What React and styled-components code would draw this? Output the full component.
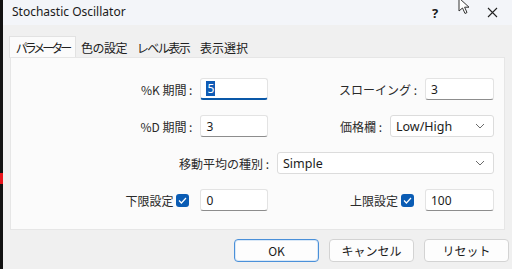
import styled, { createGlobalStyle } from "styled-components";

const GlobalStyle = createGlobalStyle`
  html, body {
    margin: 0;
    padding: 0;
    background: #efefef;
  }
  body {
    font-family: "Noto Sans CJK JP", "Noto Sans", sans-serif;
    font-size: 12px;
    color: #1b1b1b;
  }
`;

const Screen = styled.div`
  display: flex;
  width: 512px;
  height: 269px;
  overflow: hidden;
  position: relative;
`;

const EdgeStrip = styled.div`
  width: 3px;
  background: #111;
  display: flex;
  flex-direction: column;
  padding-top: 173px;
  box-sizing: border-box;
`;

const RedMark = styled.div`
  height: 11px;
  background: #e8141c;
`;

const Dialog = styled.div`
  flex: 1;
  display: flex;
  flex-direction: column;
  background: #f0f0f0;
`;

const TitleBar = styled.div`
  height: 25px;
  background: #f3f5f9;
  display: flex;
  align-items: center;
  padding-left: 9px;
  font-family: "Noto Sans", sans-serif;
  font-size: 12px;
  color: #1a1a1a;
`;

const Title = styled.span`
  flex: 1;
  padding-bottom: 2px;
`;

const TitleButton = styled.span`
  width: ${(p) => p.w}px;
  display: flex;
  justify-content: center;
  font-size: 13px;
  font-weight: ${(p) => (p.bold ? 700 : 400)};
`;

const Tabs = styled.div`
  display: flex;
  margin: 11px 0 0 6px;
  height: 21px;
  align-items: flex-end;
`;

const Tab = styled.div`
  width: ${(p) => p.w}px;
  height: ${(p) => (p.active ? 22 : 20)}px;
  margin-bottom: ${(p) => (p.active ? -1 : 0)}px;
  background: ${(p) => (p.active ? "#fbfbfb" : "#f0f0f0")};
  border: 1px solid ${(p) => (p.active ? "#e2e2e2" : "transparent")};
  border-bottom: none;
  display: flex;
  align-items: center;
  justify-content: center;
  font-size: 12px;
  letter-spacing: ${(p) => p.tight ?? 0}px;
  color: #202020;
  box-sizing: border-box;
  white-space: nowrap;
`;

const Panel = styled.div`
  margin-left: 7px;
  width: 495px;
  height: 173px;
  background: #fbfbfb;
  border: 1px solid #e6e6e6;
  box-sizing: border-box;
  display: flex;
  flex-direction: column;
  gap: 15px;
  padding: 20px 10px 0 0;
`;

const Row = styled.div`
  display: flex;
  height: 22px;
`;

const Half = styled.div`
  width: ${(p) => p.w}px;
  display: flex;
  justify-content: flex-end;
  align-items: center;
`;

const Label = styled.span`
  margin-right: ${(p) => p.gap ?? 8}px;
  white-space: nowrap;
  font-size: 12px;
  color: #2a2a2a;
`;

const Input = styled.div`
  width: ${(p) => p.w}px;
  height: 22px;
  box-sizing: border-box;
  background: #fff;
  border: 1px solid #e3e3e3;
  border-bottom: ${(p) => (p.active ? "2px solid #0a58a8" : "1px solid #8d8d8d")};
  border-radius: 3px;
  display: flex;
  align-items: center;
  padding-left: 5px;
  font-family: "Noto Sans", sans-serif;
  font-size: 12px;
`;

const Selected = styled.span`
  background: #0f5bb5;
  color: #fff;
  padding: 0 1px;
  line-height: 15px;
`;

const Select = styled.div`
  width: ${(p) => p.w}px;
  height: 22px;
  box-sizing: border-box;
  background: #fff;
  border: 1px solid #dcdcdc;
  border-radius: 3px;
  display: flex;
  align-items: center;
  justify-content: space-between;
  padding: 0 8px 0 5px;
  font-family: "Noto Sans", sans-serif;
  font-size: 12.5px;
`;

const Check = styled.span`
  width: 13px;
  height: 13px;
  border-radius: 3px;
  background: #0a5cb4;
  display: flex;
  align-items: center;
  justify-content: center;
  margin-right: 11px;
`;

const Footer = styled.div`
  display: flex;
  justify-content: flex-end;
  gap: 10px;
  padding: 9px 3px 0 0;
`;

const Button = styled.div`
  width: 85px;
  height: 23px;
  box-sizing: border-box;
  background: #fdfdfd;
  border: 1px solid ${(p) => (p.primary ? "#4a90d9" : "#d3d3d3")};
  box-shadow: ${(p) => (p.primary ? "inset 0 0 0 1px #d9e8f7" : "none")};
  border-radius: 4px;
  display: flex;
  align-items: center;
  justify-content: center;
  font-size: 12px;
`;

const Cursor = styled.svg`
  position: absolute;
  left: 458px;
  top: -3px;
`;

function Chevron() {
  return (
    <svg width="10" height="6" viewBox="0 0 10 6">
      <path d="M1 1 L5 5 L9 1" fill="none" stroke="#6b6b6b" strokeWidth="1" />
    </svg>
  );
}

function CheckBox() {
  return (
    <Check>
      <svg width="9" height="7" viewBox="0 0 9 7">
        <path d="M1 3.5 L3.4 6 L8 1" fill="none" stroke="#fff" strokeWidth="1.2" />
      </svg>
    </Check>
  );
}

export default function App() {
  return (
    <>
      <GlobalStyle />
      <Screen>
        <EdgeStrip>
          <RedMark />
        </EdgeStrip>
        <Dialog>
          <TitleBar>
            <Title>Stochastic Oscillator</Title>
            <TitleButton w={30} bold>?</TitleButton>
            <TitleButton w={22} />
            <TitleButton w={40}>
              <svg width="11" height="11" viewBox="0 0 11 11">
                <path d="M1 1 L10 10 M10 1 L1 10" stroke="#222" strokeWidth="1.1" />
              </svg>
            </TitleButton>
          </TitleBar>
          <Tabs>
            <Tab active w={67} tight={-3}>パラメーター</Tab>
            <Tab w={56} tight={-0.5}>色の設定</Tab>
            <Tab w={62} tight={-1.5}>レベル表示</Tab>
            <Tab w={60}>表示選択</Tab>
          </Tabs>
          <Panel>
            <Row>
              <Half w={258}>
                <Label>%K 期間 :</Label>
                <Input w={68} active>
                  <Selected>5</Selected>
                </Input>
              </Half>
              <Half w={226}>
                <Label>スローイング :</Label>
                <Input w={69}>3</Input>
              </Half>
            </Row>
            <Row>
              <Half w={258}>
                <Label>%D 期間 :</Label>
                <Input w={68}>3</Input>
              </Half>
              <Half w={226}>
                <Label>価格欄 :</Label>
                <Select w={104}>
                  Low/High
                  <Chevron />
                </Select>
              </Half>
            </Row>
            <Row>
              <Half w={484}>
                <Label>移動平均の種別 :</Label>
                <Select w={217}>
                  Simple
                  <Chevron />
                </Select>
              </Half>
            </Row>
            <Row>
              <Half w={258}>
                <Label gap={3}>下限設定</Label>
                <CheckBox />
                <Input w={68}>0</Input>
              </Half>
              <Half w={226}>
                <Label gap={3}>上限設定</Label>
                <CheckBox />
                <Input w={69}>100</Input>
              </Half>
            </Row>
          </Panel>
          <Footer>
            <Button primary>OK</Button>
            <Button>キャンセル</Button>
            <Button>リセット</Button>
          </Footer>
        </Dialog>
        <Cursor width="14" height="18" viewBox="0 0 14 18">
          <path d="M1 1 L1 14 L4.5 11 L7 16.5 L9 15.5 L6.6 10.2 L11 10.2 Z" fill="#fff" stroke="#333" strokeWidth="1" />
        </Cursor>
      </Screen>
    </>
  );
}
